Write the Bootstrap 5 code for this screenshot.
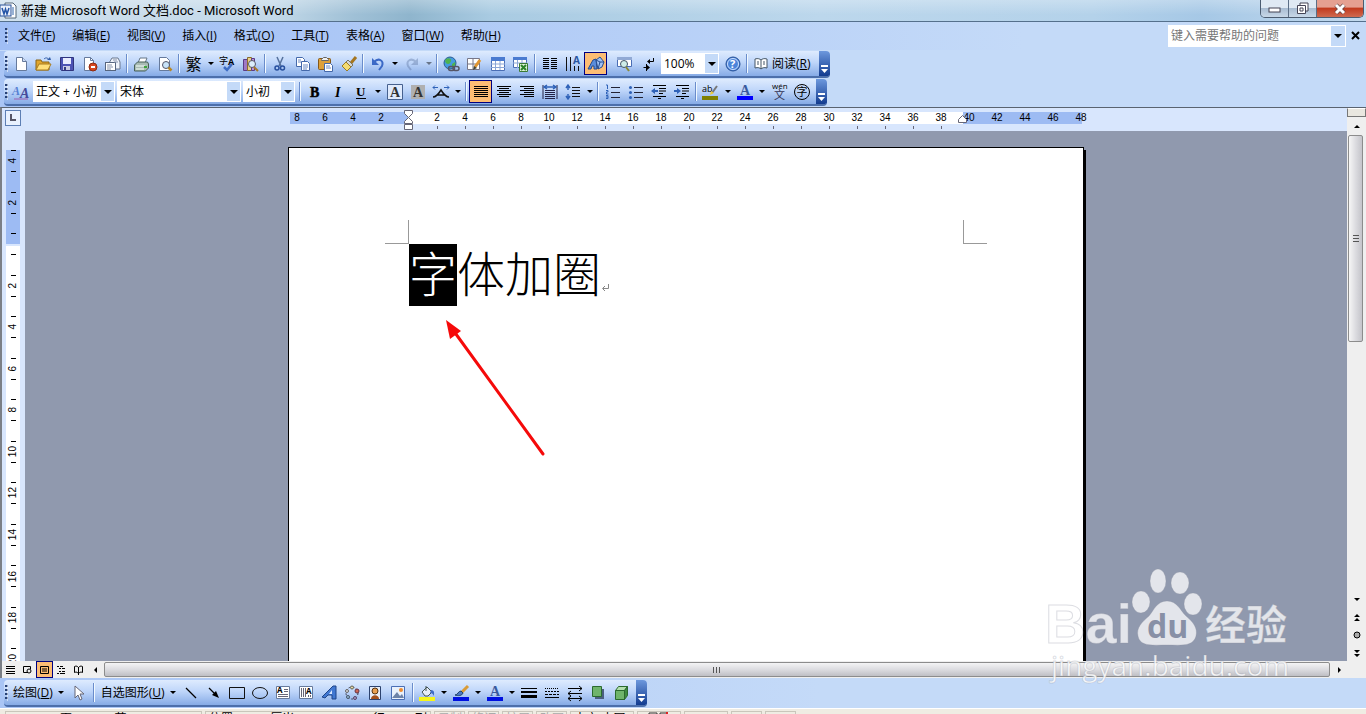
<!DOCTYPE html>
<html lang="zh-CN">
<head>
<meta charset="utf-8">
<meta name="viewport" content="width=device-width, initial-scale=1">
<title>新建 Microsoft Word 文档.doc - Microsoft Word</title>
<link href="https://cdn.jsdelivr.net/npm/bootstrap@5.3.0/dist/css/bootstrap.min.css" rel="stylesheet">
<style>
body{font-family:"Open Sans","Noto Sans CJK SC",sans-serif;font-size:12px;line-height:16px;color:#000;background:#c4daf8}
button{padding:0;border:0;background:none;color:inherit}
svg{display:block;flex:none;overflow:visible}
.titlebar{height:22px;font-family:Roboto,"Noto Sans CJK SC",sans-serif;font-size:13px;background:linear-gradient(180deg,#fff4,#fff0 70%),linear-gradient(90deg,#cfe0ed 0,#c3d9e9 20%,#9fc0d6 26%,#8fb5cd 30%,#a9cbe2 36%,#bcd7ec 60%,#b4d2ea 80%,#a6c8e6 88%,#c3daee 100%);border-bottom:1px solid #55708c}
.winbtns{height:18px;border:1px solid #4b5c70;border-top:0;border-radius:0 0 5px 5px;overflow:hidden;margin-right:2px}
.winbtns button{width:28px;background:linear-gradient(#dfe9f3 45%,#a9bdd2 50%,#c8d8e8);border-right:1px solid #5c6f86;display:flex;align-items:center;justify-content:center}
.winbtns .closebtn{width:46px;border:0;background:linear-gradient(#e5a091 40%,#c23c20 50%,#cf6a50)}
.menubar{height:28px;margin-bottom:1px;background:linear-gradient(90deg,#a0bef5,#c4daf8 75%)}
.menus{margin-left:9px;gap:17px}
.menus a{color:#000;text-decoration:none;white-space:nowrap}
u{text-underline-offset:1px}
.grip{width:3px;height:16px;margin:0 1px;background:repeating-linear-gradient(#274176 0 2px,transparent 2px 4px);border-right:1px solid #fff8;flex:none}
.ask{width:178px;height:22px;background:#fff}
.ask input{border:0;outline:0;width:163px;background:none;font-size:12px;padding:0 3px}
.ask input::placeholder{color:#777;opacity:1}
.ask button{width:14px;height:20px;background:#c4daf8;margin:1px}
.bars{background:linear-gradient(90deg,#a9c5f5,#c4daf8 60%)}
.lower{padding-top:2px}
.tbar{height:27px;width:fit-content;margin:0 0 1px 4px;border-bottom:2px solid #4c6fab;border-radius:4px;background:linear-gradient(#deebfe,#bfd6fa 45%,#86abe6);overflow:hidden}
.tb{width:23px;height:23px;display:flex;align-items:center;justify-content:center;flex:none}
.dd{width:11px;height:23px;display:flex;align-items:center;justify-content:center;flex:none}
.dd::after,.txt.more::after,.ask button::after{content:"";border:3px solid transparent;border-top:3px solid #000;border-bottom:0;display:inline-block}
.ask button::after{border-width:4px 4px 0}
.off{opacity:.45}
.on{background:#fdbd74;border:1px solid #000080}
.sep{width:1px;height:19px;background:#6a8ccb;margin:0 3px 0 2px;box-shadow:1px 0 #f1f9ff;flex:none}
.tail{width:11px;height:25px;margin-left:3px;background:linear-gradient(#6d98dd,#123b8f);display:flex;align-items:end;justify-content:center;padding-bottom:2px}
.txt{height:23px;display:flex;align-items:center;white-space:nowrap;gap:3px}
.txt.more{gap:5px}
.combo{appearance:none;border:0;border-radius:0;height:21px;font:inherit;color:#000;padding:0 15px 0 3px;margin-right:2px;background:url("data:image/svg+xml,%3Csvg xmlns='http://www.w3.org/2000/svg' width='14' height='21'%3E%3Cpath fill='%23c4daf8' d='M0 1h13v19H0z'/%3E%3Cpath d='M3 9h8l-4 4z'/%3E%3C/svg%3E") right/14px 21px no-repeat #fff}
.w-style{width:82px;margin-left:1px}.w-font{width:124px}.w-size{width:52px}.w-zoom{width:58px;margin-left:2px}
.edge{border-left:2px solid #7b7f86;border-top:1px solid #5a6370}
.hruler{height:23px;background:#d8e6fd}
.tabsel{width:16px;height:16px;margin:2px 4px 0 3px;border:1px solid #5d7fb4;background:#e8f1fe;display:flex;align-items:center;justify-content:center}
.hscale{padding-left:6px;font:10px/12px "Liberation Sans",sans-serif}
.hscale ol{width:812px;margin:4px auto 0;padding:0;list-style:none;display:flex;background:linear-gradient(90deg,transparent 7px,#9dbbf3 7px 125px,#fff 125px 680px,#9dbbf3 680px 799px,transparent 799px) 0 0/100% 12px no-repeat}
.hscale li{width:28px;text-align:center;flex:none}
.hscale .tick::after{content:"";display:block;width:1px;height:3px;margin:2px auto 0;background:#667}
.indent{left:120px;top:-2px}
.indent-r{left:674px;top:1px}
.vruler{width:23px;background:#d8e6fd;padding:9px 5px 0 4px;overflow:hidden;font:10px/12px "Liberation Sans",sans-serif}
.vruler ol{height:540px;margin:0;padding:0;list-style:none;background:linear-gradient(transparent 10px,#9dbbf3 10px 104px,#d8e6fd 104px 106px,#fff 106px)}
.vruler li{flex:1 1 0;display:flex;align-items:center;justify-content:center;background:linear-gradient(#000,#000) 5px 10px/5px 1px no-repeat,linear-gradient(#000,#000) 5px 31px/5px 1px no-repeat}
.vruler span{writing-mode:vertical-rl;transform:rotate(180deg)}
.desk{background:#9099ae;padding-top:16px;overflow:hidden}
.sheet{width:796px;height:1123px;background:#fff;border:1px solid #000;box-shadow:2px 3px #000}
.marks{padding:72px 96px 0}
.mark1,.mark2{width:24px;height:24px;border-bottom:1px solid #999}
.mark1{border-right:1px solid #999}.mark2{border-left:1px solid #999}
.doctext{margin:0 0 0 120px;font:300 48px/54px "Noto Sans CJK SC",sans-serif;display:flex}
.doctext mark{background:#000;color:#fff;padding:0 0 8px}
.pointer{left:150px;top:168px}
.vscroll{width:19px;background:#efefef;font-size:0}
.splitter{height:9px;border:1px solid #777;border-top-color:#fff;background:#e9e7e0}
.vthumb{height:207px;width:15px;margin-left:1px;border:1px solid #8c8c8c;border-radius:2px;background:linear-gradient(90deg,#f6f6f6,#dcdce0 50%,#c4c4ca);display:flex;align-items:center;justify-content:center}
.vs{height:18px;display:flex;align-items:center;justify-content:center}
.hscroll{height:17px;background:#efefef}
.hscroll .vw{width:17px;height:17px;display:flex;align-items:center;justify-content:center;flex:none}
.hthumb{height:15px;margin-top:1px;border:1px solid #8c8c8c;border-radius:2px;background:linear-gradient(#f4f4f5,#dcdce0 50%,#bfbfc4);display:flex;align-items:center;justify-content:center}
.status{height:6px;background:#efece3;border-top:1px solid #fff;overflow:hidden;padding:2px 0 0 5px;gap:3px}
.status div{border:1px solid #c9c6bb;height:20px;line-height:13px;padding:0 3px;white-space:nowrap;flex:none}
.status .dim{color:#aaa}
.status .s1{width:197px;padding:0 24px 0 44px}.s2{width:226px}.s3{width:31px}.s4{width:64px}.s5{width:44px}
.wm{right:70px;bottom:28px;pointer-events:none}
</style>
</head>
<body class="vh-100 overflow-hidden d-flex flex-column position-relative">
<header class="titlebar d-flex justify-content-between flex-shrink-0">
  <div class="d-flex align-items-center gap-1">
    <svg width="17" height="17" viewBox="0 0 17 17"><path d="M5 1h8l3 3v12H5z" fill="#fff" stroke="#567"/><path d="M12 6h2M12 8h2M12 10h2M12 12h2" stroke="#36a"/><rect x="0" y="3" width="11" height="11" fill="#e9f0fb" stroke="#2a5298"/><path d="M2 6l2 6 1.500-5L7 12l2-6" fill="none" stroke="#2454a6" stroke-width="1.500"/></svg>
    <span>新建 Microsoft Word 文档.doc - Microsoft Word</span>
  </div>
  <div class="winbtns d-flex">
    <button aria-label="最小化"><svg width="14" height="10"><rect x="1" y="4" width="11" height="4" fill="#fff" stroke="#445"/></svg></button>
    <button aria-label="还原"><svg width="14" height="13" fill="#fff" stroke="#445"><path d="M4 1h8v8H4z"/><path d="M1.500 3.500h8v8h-8z"/><path d="M4 6h3v3H4z"/></svg></button>
    <button class="closebtn" aria-label="关闭"><svg width="14" height="12"><path d="M3 2l8 8M11 2l-8 8" stroke="#644" stroke-width="4.500"/><path d="M3 2l8 8M11 2l-8 8" stroke="#fff" stroke-width="3"/></svg></button>
  </div>
</header>

<nav class="menubar d-flex align-items-center flex-shrink-0 ps-1">
  <span class="grip"></span>
  <div class="menus d-flex flex-grow-1">
    <a href="#">文件(<u>F</u>)</a><a href="#">编辑(<u>E</u>)</a><a href="#">视图(<u>V</u>)</a><a href="#">插入(<u>I</u>)</a><a href="#">格式(<u>O</u>)</a><a href="#">工具(<u>T</u>)</a><a href="#">表格(<u>A</u>)</a><a href="#">窗口(<u>W</u>)</a><a href="#">帮助(<u>H</u>)</a>
  </div>
  <div class="ask d-flex align-items-center"><input type="text" placeholder="键入需要帮助的问题" aria-label="键入需要帮助的问题"><button class="d-flex align-items-center justify-content-center" aria-label="展开"></button></div>
  <button class="mx-1" aria-label="关闭文档"><svg width="12" height="12"><path d="M2 2l7 7M9 2L2 9" stroke="#000" stroke-width="2"/></svg></button>
</nav>

<div class="bars flex-shrink-0">
<div class="tbar d-flex align-items-center">
  <span class="grip"></span>
  <button class="tb" aria-label="新建"><svg width="16" height="16"><path d="M3.500 1.500h6l4 4v9h-10z" fill="#fff" stroke="#667a9c"/><path d="M9.500 1.500v4h4" fill="#cddcf5" stroke="#667a9c"/></svg></button>
  <button class="tb" aria-label="打开"><svg width="17" height="16"><path d="M1 14V4h5l1 2h7v8z" fill="#e0a52c" stroke="#8a6414"/><path d="M1 14l3-6h12l-3 6z" fill="#ffdf7a" stroke="#a87b20"/><path d="M9 3c2-2 4-1 5 1" fill="none" stroke="#345ea8"/><path d="M12 4h4l-1-3z" fill="#345ea8"/></svg></button>
  <button class="tb" aria-label="保存"><svg width="16" height="16"><path d="M1.500 1.500h13v13h-12l-1-1z" fill="#4c53b4" stroke="#30357e"/><path d="M4 2h8v6H4z" fill="#e8ecff"/><path d="M4 10h7v4H4z" fill="#c9cce4"/><path d="M5 11h2v3H5z" fill="#333a80"/></svg></button>
  <button class="tb" aria-label="权限"><svg width="16" height="16"><path d="M2.500 1.500h6l3 3v10h-9z" fill="#fff" stroke="#667a9c"/><path d="M8.500 1.500v3h3" fill="none" stroke="#667a9c"/><circle cx="11" cy="11" r="4" fill="#d6461f" stroke="#8d2a11"/><path d="M9 11h4" stroke="#fff" stroke-width="2"/></svg></button>
  <button class="tb" aria-label="电子邮件"><svg width="17" height="16"><path d="M5 7l3-5h6l2 4v7h-5" fill="#eef2f9" stroke="#6a7890"/><rect x="1.500" y="6.500" width="10" height="8" fill="#fff" stroke="#56657e"/><path d="M3 9h5M3 11h6M3 13h4M9 4h4M10 6h4" stroke="#8793ab"/></svg></button>
  <span class="sep"></span>
  <button class="tb" aria-label="打印"><svg width="17" height="16"><path d="M5 7l2-5h7l-2 5z" fill="#fff" stroke="#678"/><path d="M1.500 9l3-3h10l1 2v4l-3 3h-11z" fill="#a9bcb4" stroke="#476157"/><path d="M3 10h9M3 13h8" stroke="#f4fff8"/><path d="M11 11h3" stroke="#3ea43c" stroke-width="2"/></svg></button>
  <button class="tb" aria-label="打印预览"><svg width="16" height="16"><path d="M2.500 1.500h7l3 3v10h-10z" fill="#fff" stroke="#667a9c"/><circle cx="9" cy="9" r="3.500" fill="#c9e4f8" stroke="#556"/><path d="M11.500 11.500l3 3" stroke="#b98722" stroke-width="2.500"/></svg></button>
  <span class="sep"></span>
  <button class="tb fs-6" aria-label="繁体">繁</button><button class="dd" aria-label="更多"></button>
  <button class="tb" aria-label="拼写"><svg width="18" height="16"><text x="0" y="8" font-size="9">字</text><text x="9" y="9" font-size="9" font-weight="bold">A</text><path d="M5 11l3 3 5-6" fill="none" stroke="#3e6cc4" stroke-width="2.500"/></svg></button>
  <button class="tb" aria-label="信息检索"><svg width="17" height="16"><path d="M1.500 3.500h4v11h-4z" fill="#9f78c6" stroke="#5b3b87"/><path d="M5.500 1.500h4v13h-4z" fill="#ead08a" stroke="#8a6c2a"/><path d="M9.500 2.500h3v12h-3z" fill="#b993d6" stroke="#5b3b87"/><circle cx="10" cy="8" r="3.500" fill="#dceefc" stroke="#556"/><path d="M12 11l4 4" stroke="#a5782a" stroke-width="2"/></svg></button>
  <span class="sep"></span>
  <button class="tb" aria-label="剪切"><svg width="16" height="16" fill="none"><path d="M5 1l4 9M11 1L7 10" stroke="#56719c" stroke-width="1.500"/><circle cx="5" cy="12" r="2" stroke="#274f9e" stroke-width="1.500"/><circle cx="10.500" cy="12" r="2" stroke="#274f9e" stroke-width="1.500"/></svg></button>
  <button class="tb" aria-label="复制"><svg width="16" height="16" fill="#fff" stroke="#4468aa"><path d="M1.500 1.500h6l2 2v7h-8z"/><path d="M6.500 5.500h6l2 2v7h-8z"/><path d="M3 4h3M3 6h3M8 9h5M8 11h5M8 13h4" stroke="#6d8bc4"/></svg></button>
  <button class="tb" aria-label="粘贴"><svg width="17" height="16"><rect x="1.500" y="2.500" width="12" height="11" rx="1" fill="#dda03a" stroke="#85591a"/><path d="M4.500 3.500l2-2h3l2 2v1h-7z" fill="#eee" stroke="#666"/><path d="M7.500 7.500h6l2 2v6h-8z" fill="#fff" stroke="#4468aa"/><path d="M9 10h4M9 12h5" stroke="#6d8bc4"/></svg></button>
  <button class="tb" aria-label="格式刷"><svg width="16" height="16"><path d="M15 1l-5 6" stroke="#a5751f" stroke-width="3"/><path d="M7 4l5 5-2 2-5-5z" fill="#d5d5d5" stroke="#776"/><path d="M5 6l5 5-4 4-5-5z" fill="#f4dc72" stroke="#9b7c23"/></svg></button>
  <span class="sep"></span>
  <button class="tb" aria-label="撤消"><svg width="16" height="16"><path d="M4 6c5-5 10-1 8 4l-3 4" fill="none" stroke="#3b69c6" stroke-width="2"/><path d="M2 2v7h7z" fill="#3b69c6"/></svg></button><button class="dd" aria-label="更多"></button>
  <button class="tb off" aria-label="恢复"><svg width="16" height="16"><path d="M12 6C7 1 2 5 4 10l3 4" fill="none" stroke="#6880ab" stroke-width="2"/><path d="M14 2v7H7z" fill="#6880ab"/></svg></button><button class="dd off" aria-label="更多"></button>
  <span class="sep"></span>
  <button class="tb" aria-label="超链接"><svg width="17" height="16"><circle cx="7" cy="7" r="6" fill="#459be0" stroke="#2a5d90"/><path d="M3 3c3-2 6 0 5 2s-1 3-3 3-4-3-2-5M9 8l3-2c1 3-1 5-3 6z" fill="#4fb34f"/><rect x="5.500" y="10.500" width="6" height="4" rx="2" fill="none" stroke="#556" stroke-width="1.500"/><rect x="10" y="10.500" width="6" height="4" rx="2" fill="none" stroke="#556" stroke-width="1.500"/></svg></button>
  <button class="tb" aria-label="表格和边框"><svg width="17" height="16"><path d="M1.500 2.500h12v11h-12z" fill="#fff" stroke="#778"/><path d="M1 8h12M7 3v10" stroke="#778"/><path d="M14 4l-5 7" stroke="#e0952f" stroke-width="3"/><path d="M7 14l1-4 3 2z" fill="#443"/></svg></button>
  <button class="tb" aria-label="插入表格"><svg width="16" height="16"><path d="M1.500 1.500h13v13h-13z" fill="#fff" stroke="#4a6eb5"/><path d="M1 1h14v4H1z" fill="#4a7bd0"/><path d="M1 8h14M1 11.500h14M5.500 5v9M10 5v9" stroke="#8ba6d6"/></svg></button>
  <button class="tb" aria-label="插入 Excel 工作表"><svg width="17" height="16"><path d="M1.500 1.500h13v10h-13z" fill="#fff" stroke="#4a6eb5"/><path d="M1 1h14v3H1z" fill="#4a7bd0"/><path d="M1 7h14M5.500 4v8M10 4v8" stroke="#8ba6d6"/><path d="M7.500 7.500h8v8h-8z" fill="#dff2d8" stroke="#3b7a35"/><path d="M9 9l5 5M14 9l-5 5" stroke="#2b8328" stroke-width="2"/></svg></button>
  <span class="sep"></span>
  <button class="tb" aria-label="分栏"><svg width="16" height="16"><path d="M1 2.500h6M1 4.500h6M1 6.500h6M1 8.500h6M1 10.500h6M1 12.500h6M9 2.500h6M9 4.500h6M9 6.500h6M9 8.500h6M9 10.500h6M9 12.500h6" stroke="#000"/></svg></button>
  <button class="tb" aria-label="更改文字方向"><svg width="17" height="16"><path d="M2.500 1v14M6.500 1v14M10.500 10v5M14.500 10v5" stroke="#111"/><text x="9" y="8" font-size="10" font-weight="bold" fill="#28559f">A</text></svg></button>
  <button class="tb on" aria-label="绘图"><svg width="18" height="16"><path d="M1 13l5-9 3-1 1 10H7v-3H5l-1 3z" fill="#5b8ddc" stroke="#264c90"/><path d="M9 4l4-3 4 5-2 5-4 2z" fill="#9fc1f4" stroke="#264c90"/><path d="M9 4l4 2 4 0M13 6l-2 7" fill="none" stroke="#264c90"/></svg></button>
  <span class="sep invisible"></span>
  <button class="tb" aria-label="文档结构图"><svg width="17" height="16"><path d="M1.500 1.500h14v9h-14z" fill="#fff" stroke="#4a6eb5"/><path d="M1 1h15v3H1z" fill="#91a9d4"/><circle cx="8" cy="8" r="3.500" fill="#cfeee8" stroke="#456"/><path d="M10 11l3 4" stroke="#8a8a35" stroke-width="2"/></svg></button>
  <button class="tb" aria-label="显示编辑标记"><svg width="16" height="16" fill="none" stroke="#000"><path d="M13.500 2v3.500H8M3.500 11.500H9M6.500 8v7"/><path d="M10 3L7 5.500 10 8zM7 9l3 2.500L7 14z" fill="#000" stroke="none"/></svg></button>
  <select class="combo w-zoom" aria-label="显示比例"><option>100%</option></select>
  <button class="tb" aria-label="帮助"><svg width="16" height="16"><circle cx="8" cy="8" r="7" fill="#4c85da" stroke="#275196"/><circle cx="8" cy="8" r="5.500" fill="none" stroke="#cce0ff"/><text x="5" y="12" font-size="11" font-weight="bold" fill="#fff">?</text></svg></button>
  <span class="sep"></span>
  <button class="txt ps-1"><svg width="15" height="14" fill="#fff" stroke="#456"><path d="M1 2c3-1 5 0 6 1 1-1 3-2 6-1v9c-3-1-5 0-6 1-1-1-3-2-6-1zM7 3v9"/><path d="M3 5h2M3 7h2M9 5h2M9 7h2"/></svg><span>阅读(<u>R</u>)</span></button>
  <span class="tail ms-2"><svg width="7" height="9"><path d="M0 1h7" stroke="#fff" stroke-width="2"/><path d="M0 4h7L3.500 8z" fill="#fff"/></svg></span>
</div>

<div class="tbar d-flex align-items-center">
  <span class="grip"></span>
  <button class="tb" aria-label="格式窗格"><svg width="18" height="16"><text x="0" y="11" font-size="12" font-style="italic" font-family="Liberation Serif" font-weight="bold" fill="#5580d2">A</text><text x="8" y="14" font-size="14" font-style="italic" font-family="Liberation Serif" font-weight="bold" fill="#444a9a">A</text><path d="M2 15h14" stroke="#a060b0"/></svg></button>
  <select class="combo w-style" aria-label="样式"><option>正文 + 小初</option></select>
  <select class="combo w-font" aria-label="字体"><option>宋体</option></select>
  <select class="combo w-size" aria-label="字号"><option>小初</option></select>
  <span class="sep"></span>
  <button class="tb" aria-label="加粗"><svg width="16" height="16"><text x="3" y="13" font-size="14" font-weight="bold" font-family="Liberation Serif" stroke="#000" stroke-width=".5">B</text></svg></button>
  <button class="tb" aria-label="倾斜"><svg width="16" height="16"><text x="5" y="13" font-size="14" font-weight="bold" font-style="italic" font-family="Liberation Serif">I</text></svg></button>
  <button class="tb" aria-label="下划线"><svg width="16" height="16"><text x="3" y="12" font-size="13" font-weight="bold" font-family="Liberation Serif">U</text><path d="M3 14.500h10" stroke="#000"/></svg></button><button class="dd" aria-label="更多"></button>
  <button class="tb" aria-label="字符边框"><svg width="16" height="16"><path d="M.5.5h15v15H.5z" fill="#dfeafd" stroke="#46618f"/><text x="3" y="13" font-size="14" font-weight="bold" font-family="Liberation Serif" fill="#333">A</text></svg></button>
  <button class="tb" aria-label="字符底纹"><svg width="16" height="16"><path d="M1 1h14v14H1z" fill="#b0b0b0"/><text x="3" y="13" font-size="14" font-weight="bold" font-family="Liberation Serif" fill="#333">A</text></svg></button>
  <button class="tb" aria-label="字符缩放"><svg width="18" height="16"><path d="M1 13c3 0 5-2 8-7 3 5 5 7 8 7M5 11h8" fill="none" stroke="#111" stroke-width="1.500"/><path d="M1 3.500h5M12 3.500h5M3 1.500L1 3.500l2 2M15 1.500l2 2-2 2" fill="none" stroke="#2f62b8"/></svg></button><button class="dd" aria-label="更多"></button>
  <span class="sep"></span>
  <button class="tb on" aria-label="两端对齐"><svg width="16" height="16"><path d="M1 2.500h14M1 4.500h14M1 6.500h14M1 8.500h14M1 10.500h14M1 12.500h14" stroke="#000"/></svg></button>
  <button class="tb" aria-label="居中"><svg width="16" height="16"><path d="M1 2.500h14M3 4.500h10M1 6.500h14M3 8.500h10M1 10.500h14M3 12.500h10" stroke="#000"/></svg></button>
  <button class="tb" aria-label="右对齐"><svg width="16" height="16"><path d="M1 2.500h14M5 4.500h10M1 6.500h14M5 8.500h10M1 10.500h14M5 12.500h10" stroke="#000"/></svg></button>
  <button class="tb" aria-label="分散对齐"><svg width="16" height="16"><path d="M1 1v14M15 1v14M3 6.500h10M3 8.500h10M3 10.500h10M3 12.500h10M3 14.500h10" stroke="#224"/><path d="M2 3h12M5 1L2 3l3 2M11 1l3 2-3 2" fill="none" stroke="#2f62b8" stroke-width="1.500"/></svg></button>
  <button class="tb" aria-label="行距"><svg width="16" height="16"><path d="M7 3.500h8M7 6.500h8M7 9.500h8M7 12.500h8" stroke="#111"/><path d="M3 1v5M3 10v5M1 4l2-3 2 3M1 12l2 3 2-3" fill="none" stroke="#2f62b8" stroke-width="1.500"/></svg></button><button class="dd" aria-label="更多"></button>
  <span class="sep"></span>
  <button class="tb" aria-label="编号"><svg width="16" height="16"><path d="M6 3.500h9M6 8.500h9M6 13.500h9" stroke="#223"/><path d="M1 1h1.500v4M1 6.500h2v1.500H1.500V10h2M1 11.500h2v3H1M1 13h2" fill="none" stroke="#2f62b8"/></svg></button>
  <button class="tb" aria-label="项目符号"><svg width="16" height="16"><path d="M6 3.500h9M6 8.500h9M6 13.500h9" stroke="#223"/><g fill="#2f62b8"><circle cx="2.500" cy="3.500" r="1.500"/><circle cx="2.500" cy="8.500" r="1.500"/><circle cx="2.500" cy="13.500" r="1.500"/></g></svg></button>
  <button class="tb" aria-label="减少缩进量"><svg width="16" height="16"><path d="M2 1.500h13M8 4.500h7M8 7h7M8 9.500h4M2 12.500h13M7 14.500h3" stroke="#000" stroke-width="1.200"/><path d="M0 7l4-3v2h3v2H4v2z" fill="#2f62b8"/></svg></button>
  <button class="tb" aria-label="增加缩进量"><svg width="16" height="16"><path d="M2 1.500h13M8 4.500h7M8 7h7M8 9.500h4M2 12.500h13M7 14.500h3" stroke="#000" stroke-width="1.200"/><path d="M7 7L3 4v2H0v2h3v2z" fill="#2f62b8"/></svg></button>
  <span class="sep"></span>
  <button class="tb" aria-label="突出显示"><svg width="17" height="16"><path d="M0 12h16v4H0z" fill="#808000"/><text x="0" y="8" font-size="9">ab</text><path d="M15 2l-5 7" stroke="#777" stroke-width="2"/><path d="M9 7l3 2-4 2z" fill="#ec3"/></svg></button><button class="dd" aria-label="更多"></button>
  <button class="tb" aria-label="字体颜色"><svg width="16" height="16"><path d="M0 12h16v4H0z" fill="#00f"/><text x="3" y="11" font-size="14" font-weight="bold" font-family="Liberation Serif" fill="#3a5a9e">A</text></svg></button><button class="dd" aria-label="更多"></button>
  <button class="tb" aria-label="拼音指南"><svg width="18" height="18"><text x="2" y="6" font-size="8">wén</text><text x="4" y="16" font-size="11" fill="#335">文</text></svg></button>
  <button class="tb" aria-label="带圈字符"><svg width="18" height="18"><circle cx="9" cy="9" r="7.500" fill="none" stroke="#000"/><text x="3.500" y="13" font-size="11">字</text></svg></button>
  <span class="tail"><svg width="7" height="9"><path d="M0 1h7" stroke="#fff" stroke-width="2"/><path d="M0 4h7L3.500 8z" fill="#fff"/></svg></span>
</div>
</div>

<main class="edge d-flex flex-grow-1 overflow-hidden">
  <div class="d-flex flex-column flex-grow-1 overflow-hidden">
    <div class="hruler d-flex flex-shrink-0">
      <button class="tabsel" aria-label="制表符"><svg width="8" height="8"><path d="M2 0v6h5" fill="none" stroke="#556" stroke-width="2"/></svg></button>
      <div class="hscale flex-grow-1">
        <ol class="position-relative"><li>8</li><li>6</li><li>4</li><li>2</li><li></li><li class="tick">2</li><li class="tick">4</li><li class="tick">6</li><li class="tick">8</li><li class="tick">10</li><li class="tick">12</li><li class="tick">14</li><li class="tick">16</li><li class="tick">18</li><li class="tick">20</li><li class="tick">22</li><li class="tick">24</li><li class="tick">26</li><li class="tick">28</li><li class="tick">30</li><li class="tick">32</li><li class="tick">34</li><li class="tick">36</li><li class="tick">38</li><li>40</li><li>42</li><li>44</li><li>46</li><li>48</li>
          <svg class="indent position-absolute" width="12" height="21" fill="#fff" stroke="#667"><path d="M1.500.5h8v3l-4 4-4-4zM5.500 7.500l4 4v2h-8v-2zM1.500 14.500h8v5h-8z"/></svg>
          <svg class="indent-r position-absolute" width="12" height="12" fill="#fff" stroke="#667"><path d="M5.500 2.500l4 4v3h-8v-3z"/></svg>
        </ol>
      </div>
    </div>
    <div class="d-flex flex-grow-1 overflow-hidden">
      <div class="vruler flex-shrink-0"><ol class="d-flex flex-column"><li><span>4</span></li><li><span>2</span></li><li></li><li><span>2</span></li><li><span>4</span></li><li><span>6</span></li><li><span>8</span></li><li><span>10</span></li><li><span>12</span></li><li><span>14</span></li><li><span>16</span></li><li><span>18</span></li><li><span>20</span></li></ol></div>
      <div class="desk flex-grow-1">
        <article class="sheet mx-auto position-relative">
          <div class="marks d-flex justify-content-between"><span class="mark1"></span><span class="mark2"></span></div>
          <p class="doctext"><mark>字</mark>体加圈<svg class="align-self-center mt-4" width="9" height="9" fill="none" stroke="#888"><path d="M7.500 1v4.500H2M4 3L1.500 5.500 4 8"/></svg></p>
          <svg class="pointer position-absolute" width="112" height="142"><path d="M14 14l90 124" stroke="#f50a0a" stroke-width="3" stroke-linecap="round"/><path d="M7 4l15 11-11 8z" fill="#f50a0a"/></svg>
        </article>
      </div>
    </div>
    <div class="hscroll d-flex flex-shrink-0">
      <button class="vw" aria-label="普通视图"><svg width="12" height="12"><path d="M1 2.500h9M1 4.500h9M1 7.500h9M1 9.500h9" stroke="#000"/></svg></button>
      <button class="vw" aria-label="Web 版式"><svg width="12" height="12" fill="none" stroke="#000"><path d="M6 8.500H1.500v-6h7V5"/><circle cx="7" cy="7" r="2"/></svg></button>
      <button class="vw on" aria-label="页面视图"><svg width="12" height="12" fill="none" stroke="#000"><path d="M1.500 2.500h8v7h-8zM3 5h5M3 7h5"/></svg></button>
      <button class="vw" aria-label="大纲视图"><svg width="12" height="12" stroke="#000"><path d="M1 2.500h2M4 2.500h3M3 4.500h2M6 4.500h3M3 7.500h2M6 7.500h3M1 9.500h2M4 9.500h5"/></svg></button>
      <button class="vw" aria-label="阅读版式"><svg width="12" height="12" fill="none" stroke="#000"><path d="M1.500 2.500c2-1 3 0 4 1 1-1 2-2 4-1v6c-2-1-3 0-4 1-1-1-2-2-4-1zM5.500 3v8"/></svg></button>
      <button class="vw" aria-label="向左滚动"><svg width="6" height="8"><path d="M4 1v6L1 4z"/></svg></button>
      <div class="hthumb flex-grow-1"><svg width="10" height="8"><path d="M1.500 1v6M4.500 1v6M7.500 1v6" stroke="#555"/></svg></div>
      <button class="vw" aria-label="向右滚动"><svg width="6" height="8"><path d="M2 1v6l3-3z"/></svg></button>
    </div>
  </div>
  <div class="vscroll d-flex flex-column flex-shrink-0">
    <div class="splitter"></div>
    <button class="vs" aria-label="向上滚动"><svg width="8" height="5"><path d="M1 4h6L4 1z"/></svg></button>
    <div class="vthumb"><svg width="8" height="10"><path d="M1 1.500h6M1 4.500h6M1 7.500h6" stroke="#555"/></svg></div>
    <div class="flex-grow-1"></div>
    <button class="vs" aria-label="向下滚动"><svg width="8" height="5"><path d="M1 1h6L4 4z"/></svg></button>
    <button class="vs" aria-label="前一页"><svg width="8" height="9"><path d="M1 4h6L4 1zM1 8h6L4 5z"/></svg></button>
    <button class="vs" aria-label="选择浏览对象"><svg width="8" height="8"><circle cx="4" cy="4" r="3" fill="#aaa" stroke="#000"/></svg></button>
    <button class="vs mb-3" aria-label="下一页"><svg width="8" height="9"><path d="M1 1h6L4 4zM1 5h6L4 8z"/></svg></button>
  </div>
</main>

<div class="bars lower flex-shrink-0">
<div class="tbar d-flex align-items-center">
  <span class="grip"></span>
  <button class="txt more px-1"><span>绘图(<u>D</u>)</span></button>
  <button class="tb" aria-label="选择对象"><svg width="12" height="16"><path d="M2 1v12l3-3 2 5 2-1-2-5h4z" fill="#fff" stroke="#667"/></svg></button>
  <span class="sep"></span>
  <button class="txt more px-1"><span>自选图形(<u>U</u>)</span></button>
  <button class="tb" aria-label="直线"><svg width="16" height="16"><path d="M3 3l10 10" stroke="#000" stroke-width="1.200"/></svg></button>
  <button class="tb" aria-label="箭头"><svg width="16" height="16"><path d="M3 3l6 6" stroke="#000" stroke-width="1.200"/><path d="M13 13L6 10l4-4z"/></svg></button>
  <button class="tb" aria-label="矩形"><svg width="17" height="16"><path d="M.5 2.500h15v11H.5z" fill="none" stroke="#111"/></svg></button>
  <button class="tb" aria-label="椭圆"><svg width="17" height="16"><ellipse cx="8" cy="8" rx="7.500" ry="5.500" fill="none" stroke="#111"/></svg></button>
  <button class="tb" aria-label="文本框"><svg width="16" height="16"><path d="M1.500 1.500h13v12h-13z" fill="#fff" stroke="#667a9c"/><text x="2" y="8" font-size="8" font-weight="bold">A</text><path d="M9 4.500h4M9 6.500h4M3 9.500h10M3 11.500h10" stroke="#667"/></svg></button>
  <button class="tb" aria-label="竖排文本框"><svg width="16" height="16"><path d="M1.500 1.500h13v12h-13z" fill="#fff" stroke="#667a9c"/><text x="8" y="9" font-size="8" font-weight="bold">A</text><path d="M3.500 3v9M5.500 3v9M7.500 3v9M10.500 10v2M12.500 10v2" stroke="#667"/></svg></button>
  <button class="tb" aria-label="艺术字"><svg width="17" height="16"><path d="M1 12L12 1h3v13h-4v-4H7l-3 3z" fill="#4178d2" stroke="#1f458a"/><path d="M8 9l3-4v4z" fill="#dbe8ff"/></svg></button>
  <button class="tb" aria-label="图示"><svg width="16" height="16"><circle cx="8" cy="8" r="6" fill="none" stroke="#334" stroke-dasharray="2 2"/><circle cx="8" cy="2.500" r="1.500" fill="#e8d9a8" stroke="#665"/><circle cx="13" cy="6" r="2" fill="#c65" stroke="#634"/><circle cx="11" cy="13" r="1.500" fill="#a9c" stroke="#546"/><circle cx="4" cy="12" r="1.500" fill="#9bd" stroke="#456"/><circle cx="3" cy="6" r="1.500" fill="#ddd" stroke="#666"/></svg></button>
  <button class="tb" aria-label="剪贴画"><svg width="16" height="16"><path d="M2.500 1.500h11v13h-11z" fill="#e9eef8" stroke="#2c426e"/><circle cx="8" cy="6" r="3" fill="#e9a050" stroke="#531"/><path d="M4 14c0-5 8-5 8 0z" fill="#a4501b"/></svg></button>
  <button class="tb" aria-label="图片"><svg width="16" height="16"><path d="M1.500 1.500h13v13h-13z" fill="#e9f1fc" stroke="#4a6eb5"/><path d="M2 13l5-6 3 4 2-2 2 4z" fill="#6d83a8"/><circle cx="11" cy="5" r="2" fill="#ec8b2f"/></svg></button>
  <span class="sep"></span>
  <button class="tb" aria-label="填充颜色"><svg width="17" height="16"><path d="M0 12h16v4H0z" fill="#f6f61a"/><path d="M3 7l5-5 5 5-4 4H6z" fill="#e6edf8" stroke="#455"/><path d="M7 1v5" stroke="#455"/><path d="M12 5c4 0 3 4 3 6-1-2-2-3-4-3z" fill="#3e6cc4"/></svg></button><button class="dd" aria-label="更多"></button>
  <button class="tb" aria-label="线条颜色"><svg width="17" height="16"><path d="M0 12h16v4H0z" fill="#0010e0"/><path d="M15 1L9 7" stroke="#d99b37" stroke-width="3"/><path d="M2 10c3 0 3-4 6-4l2 2c-1 3-5 3-8 2z" fill="#4c78c6" stroke="#246"/></svg></button><button class="dd" aria-label="更多"></button>
  <button class="tb" aria-label="字体颜色"><svg width="16" height="16"><path d="M0 12h16v4H0z" fill="#0010e0"/><text x="3" y="11" font-size="14" font-weight="bold" font-family="Liberation Serif" fill="#3a5a9e">A</text></svg></button><button class="dd" aria-label="更多"></button>
  <button class="tb" aria-label="线型"><svg width="16" height="16"><path d="M0 3.500h16" stroke="#000"/><path d="M0 7h16" stroke="#000" stroke-width="2"/><path d="M0 11.500h16" stroke="#000" stroke-width="3"/></svg></button>
  <button class="tb" aria-label="虚线线型"><svg width="16" height="16" stroke="#000"><path d="M1 3.500h14" stroke-dasharray="1 1"/><path d="M1 6.500h14" stroke-dasharray="2 1"/><path d="M1 9.500h14" stroke-dasharray="3 1"/><path d="M1 12.500h14"/></svg></button>
  <button class="tb" aria-label="箭头样式"><svg width="16" height="16" fill="none" stroke="#000"><path d="M1 3.500h14M12 1l3 2.500L12 6M1 8.500h14M4 6L1 8.500 4 11M1 13.500h14M4 11l-3 2.500L4 16M12 11l3 2.500-3 2.500"/></svg></button>
  <button class="tb" aria-label="阴影样式"><svg width="16" height="16"><path d="M5 4h9v10H5z" fill="#4b5f80"/><path d="M2.500 1.500h9v10h-9z" fill="#6fb46b" stroke="#2b6a2e"/></svg></button>
  <button class="tb" aria-label="三维效果样式"><svg width="16" height="16" stroke="#2b6a2e"><path d="M2.500 5.500h9v9h-9z" fill="#6fb46b"/><path d="M2.500 5.500l3-4h9l-3 4z" fill="#b3dfae"/><path d="M11.500 5.500l3-4v9l-3 4z" fill="#3f8a40"/></svg></button>
  <span class="tail"><svg width="7" height="9"><path d="M0 1h7" stroke="#fff" stroke-width="2"/><path d="M0 4h7L3.500 8z" fill="#fff"/></svg></span>
</div>
</div>

<footer class="status d-flex flex-shrink-0">
  <div class="s1 d-flex justify-content-between"><span>1 页</span><span>1 节</span><span>1/1</span></div>
  <div class="s2 d-flex justify-content-between"><span>位置</span><span class="me-5">2.5厘米</span><span>1 行</span><span>1 列</span></div>
  <div class="s3 dim">录制</div><div class="s3 dim">修订</div><div class="s3 dim">扩展</div><div class="s3 dim">改写</div>
  <div class="s4">中文(中国)</div>
  <div class="s5 text-center"><svg class="mx-auto" width="28" height="12"><path d="M4 5V1h8v4M15 5V1h6" fill="none" stroke="#333"/><path d="M22 0v5" stroke="#d22" stroke-width="2"/></svg></div>
  <div class="s5"></div><div class="s3"></div><div class="s3"></div>
</footer>

<!-- site watermark over the lower right corner -->
<svg class="wm position-absolute" width="250" height="124" viewBox="0 0 250 124" fill="#fff" fill-opacity=".75" stroke="#8a90a0" stroke-opacity=".3">
  <text x="-1" y="81" font-family="Liberation Sans" font-weight="bold" font-size="56">Bai</text>
  <ellipse cx="95" cy="40" rx="9" ry="11"/><ellipse cx="112" cy="19" rx="8" ry="12"/><ellipse cx="134" cy="21" rx="9" ry="11"/><ellipse cx="147" cy="42" rx="9" ry="11"/>
  <path d="M121 39c10 0 13 9 19 15 7 6 12 12 10 20-3 11-15 9-29 9s-27 2-29-9c-2-8 4-14 11-20 5-6 8-15 18-15z"/>
  <text x="101" y="76" font-family="Open Sans" font-weight="bold" font-size="32" fill="#8890a6" fill-opacity="1" stroke="none">du</text>
  <text x="159" y="78" font-family="Noto Sans CJK SC" font-weight="bold" font-size="41">经验</text>
  <text x="5" y="114" font-family="Open Sans" font-size="28" fill-opacity=".9">jingyan.baidu.com</text>
</svg>
<script src="https://cdn.jsdelivr.net/npm/bootstrap@5.3.0/dist/js/bootstrap.bundle.min.js"></script>
</body>
</html>
